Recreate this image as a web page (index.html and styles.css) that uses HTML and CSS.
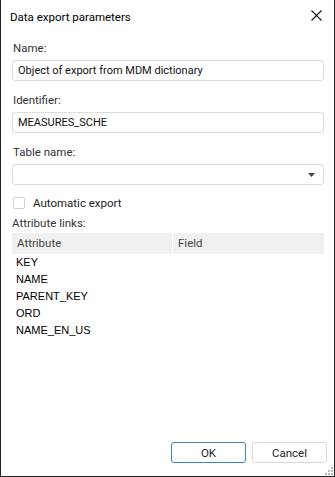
FILE: index.html
```html
<!DOCTYPE html>
<html>
<head>
    <title>Data export parameters</title>
    <meta charset="UTF-8">
    <link rel="stylesheet" href="styles.css">
</head>
<body>
    <div class="dialog">
        <div class="title-bar">
            <span class="title">Data export parameters</span>
            <svg class="close" width="11" height="11" viewBox="0 0 11 11">
                <path d="M0.5 0.5L10.5 10.5M10.5 0.5L0.5 10.5" stroke="#111" stroke-width="1.1" fill="none"/>
            </svg>
        </div>

        <div class="content">
            <div class="form-group">
                <label>Name:</label>
                <div class="field">Object of export from MDM dictionary</div>
            </div>

            <div class="form-group">
                <label>Identifier:</label>
                <div class="field">MEASURES_SCHE</div>
            </div>

            <div class="form-group">
                <label>Table name:</label>
                <div class="field select">
                    <span></span>
                    <svg width="7" height="4" viewBox="0 0 7 4"><path d="M0 0H7L3.5 4Z" fill="#444"/></svg>
                </div>
            </div>

            <div class="checkbox-group">
                <span class="checkbox"></span>
                <span>Automatic export</span>
            </div>

            <label class="links-label">Attribute links:</label>
            <div class="grid">
                <div class="grid-head">
                    <div class="col">Attribute</div>
                    <div class="col">Field</div>
                </div>
                <div class="grid-rows">
                    <div>KEY</div>
                    <div>NAME</div>
                    <div>PARENT_KEY</div>
                    <div>ORD</div>
                    <div>NAME_EN_US</div>
                </div>
            </div>
        </div>

        <div class="buttons">
            <button class="default">OK</button>
            <button>Cancel</button>
        </div>

        <svg class="grip" width="9" height="9" viewBox="0 0 9 9">
            <g fill="#b8b8b8">
                <rect x="7" y="1" width="2" height="2"/>
                <rect x="4" y="4" width="2" height="2"/>
                <rect x="7" y="4" width="2" height="2"/>
                <rect x="1" y="7" width="2" height="2"/>
                <rect x="4" y="7" width="2" height="2"/>
                <rect x="7" y="7" width="2" height="2"/>
            </g>
        </svg>
    </div>
</body>
</html>
```

FILE: styles.css
```css
:root {
    --border-color: #dcdcdc;
    --label-color: #333;
    --head-color: #f0f0f0;
}

html, body {
    margin: 0;
    padding: 0;
}

body {
    font-family: Roboto, "Noto Sans", sans-serif;
    font-size: 11.5px;
    color: #1a1a1a;
    background: white;
}

.dialog {
    position: relative;
    box-sizing: border-box;
    width: 335px;
    height: 477px;
    border: 1px solid #222;
    border-top: none;
    display: flex;
    flex-direction: column;
}

.title-bar {
    height: 33px;
    display: flex;
    align-items: center;
    justify-content: space-between;
    padding: 0 12px 0 9px;
}

.title {
    color: #000;
}

.close {
    margin-top: -2px;
}

.content {
    flex: 1;
    padding: 7px 10px 0 11px;
}

.form-group {
    margin-bottom: 11px;
}

.form-group label,
.links-label {
    display: block;
    color: var(--label-color);
    height: 16px;
    line-height: 16px;
    margin: 0 0 4px 1px;
}

.field {
    height: 21px;
    box-sizing: border-box;
    border: 1px solid var(--border-color);
    border-radius: 3px;
    padding: 0 5px;
    line-height: 19px;
    font-size: 11px;
    color: #111;
    display: flex;
    align-items: center;
    justify-content: space-between;
}

.select svg {
    margin-right: 3px;
}

.checkbox-group {
    display: flex;
    align-items: center;
    gap: 8px;
    height: 13px;
    margin: 0 0 6px 1px;
    color: #222;
}

.checkbox {
    width: 12px;
    height: 12px;
    box-sizing: border-box;
    border: 1px solid #d0d0d0;
    border-radius: 2px;
    background: white;
}

.links-label {
    margin: 0 0 2px 0;
}

.grid-head {
    display: flex;
    height: 21px;
    background: var(--head-color);
    color: #444;
}

.grid-head .col {
    line-height: 21px;
    padding-left: 5px;
}

.grid-head .col:first-child {
    width: 155px;
    border-right: 1px solid white;
}

.grid-rows {
    font-family: "Liberation Sans", Arial, sans-serif;
    font-size: 11px;
    color: #000;
    padding: 0 0 0 4px;
}

.grid-rows div {
    height: 17px;
    line-height: 17px;
}

.buttons {
    display: flex;
    justify-content: flex-end;
    gap: 6px;
    padding: 0 7px 13px 0;
}

button {
    width: 75px;
    height: 21px;
    background: white;
    border: 1px solid #dadada;
    border-radius: 3px;
    font-family: inherit;
    font-size: 11.5px;
    color: #222;
    padding: 0;
}

button.default {
    border-color: #3d83c1;
}

.grip {
    position: absolute;
    right: 1px;
    bottom: 1px;
}
```
